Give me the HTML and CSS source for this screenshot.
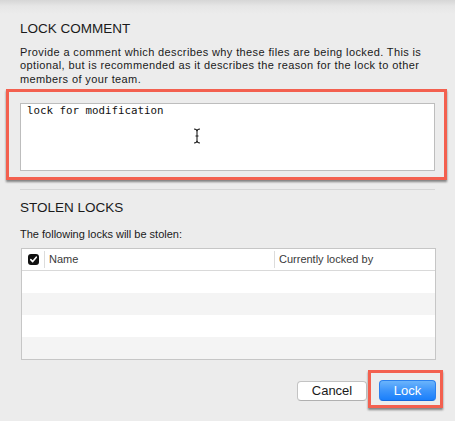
FILE: index.html
```html
<!DOCTYPE html>
<html>
<head>
<meta charset="utf-8">
<link rel="stylesheet" href="styles.css">
</head>
<body>
<div class="dialog">
  <h2 class="section-title">LOCK COMMENT</h2>
  <p class="desc wide">Provide a comment which describes why these files are being locked. This is optional, but is recommended as it describes the reason for the lock to other members of your team.</p>
  <div class="highlight comment-box">
    <div class="textarea">
      <span class="typed">lock for modification</span>
      <svg class="ibeam" width="8" height="16" viewBox="0 0 8 16">
        <path d="M1 1 Q4 1 4 3.5 Q4 1 7 1 M4 3.5 V12.5 M1 15 Q4 15 4 12.5 Q4 15 7 15 M2.5 8 H5.5" fill="none" stroke="#1e1e1e" stroke-width="1.1"/>
      </svg>
    </div>
  </div>
  <hr class="sep">
  <h2 class="section-title stolen">STOLEN LOCKS</h2>
  <p class="desc small">The following locks will be stolen:</p>
  <div class="table">
    <div class="thead">
      <div class="col-check"><span class="checkbox"><svg width="11" height="11" viewBox="0 0 11 11"><path d="M2.8 5.6 L4.7 7.6 L8.3 3.2" fill="none" stroke="#fff" stroke-width="1.6" stroke-linecap="round" stroke-linejoin="round"/></svg></span></div>
      <div class="col-name">Name</div>
      <div class="col-by">Currently locked by</div>
    </div>
    <div class="row"></div>
    <div class="row alt"></div>
    <div class="row"></div>
    <div class="row alt"></div>
  </div>
  <div class="actions">
    <button class="btn cancel">Cancel</button>
    <div class="highlight lock-box">
      <button class="btn primary">Lock</button>
    </div>
  </div>
</div>
</body>
</html>
```
FILE: styles.css
```css
html, body {
  margin: 0;
  padding: 0;
}
body {
  width: 455px;
  height: 421px;
  overflow: hidden;
  background: linear-gradient(to bottom, #d6d6d6 0px, #e6e6e6 6px, #ececec 14px, #ececec 100%);
  font-family: "Liberation Sans", Arial, sans-serif;
  color: #1f1f1f;
}
.dialog {
  padding: 21px 20px 0 20px;
}
.section-title {
  margin: 0;
  font-size: 13.5px;
  line-height: 16px;
  font-weight: normal;
  color: #1a1a1a;
}
.desc {
  margin: 9px 0 0 0;
  font-size: 11px;
  line-height: 13.3px;
  color: #1a1a1a;
}
.wide {
  letter-spacing: 0.38px;
}
.highlight {
  border: 3px solid #f3604f;
  box-shadow: 0 2px 2px rgba(0, 0, 0, 0.45);
}
.comment-box {
  margin: 3px -12px 0 -14px;
  padding: 11px 9px 6px 11px;
}
.textarea {
  position: relative;
  box-sizing: border-box;
  height: 68px;
  background: #fff;
  border: 1px solid #bdbdbd;
  padding: 0 6px;
  font-family: "DejaVu Sans Mono", "Liberation Mono", monospace;
  font-size: 10.8px;
  line-height: 13px;
  color: #111;
}
.ibeam {
  position: absolute;
  left: 172px;
  top: 24px;
}
.sep {
  margin: 9px 0 0 0;
  border: 0;
  border-top: 1px solid #d6d6d6;
  height: 0;
}
.stolen {
  margin-top: 10px;
}
.small {
  margin-top: 11px;
  line-height: 14px;
}
.table {
  margin: 7px -1px 0 1px;
  border: 1px solid #c6c6c6;
  background: #fff;
}
.thead {
  display: flex;
  height: 21px;
  border-bottom: 1px solid #d9d9d9;
  font-size: 11px;
  line-height: 21px;
  color: #3a3a3a;
}
.col-check {
  width: 23px;
  display: flex;
  align-items: center;
  padding-left: 6px;
  box-sizing: border-box;
  border-right: 1px solid #dcdcdc;
  margin: 2px 0;
}
.checkbox {
  width: 11px;
  height: 11px;
  border-radius: 3px;
  background: #111;
  display: block;
}
.checkbox svg {
  display: block;
}
.col-name {
  width: 230px;
  padding-left: 4px;
  box-sizing: border-box;
  border-right: 1px solid #dcdcdc;
  margin: 2px 0;
  line-height: 17px;
}
.col-by {
  flex: 1;
  padding-left: 4px;
  margin: 2px 0;
  line-height: 17px;
}
.row {
  height: 22px;
  background: #fff;
}
.row.alt {
  background: #f4f4f4;
}
.actions {
  display: flex;
  justify-content: flex-end;
  align-items: flex-start;
  gap: 1px;
  margin: 10px -8px 0 0;
}
.btn {
  font-family: "Liberation Sans", Arial, sans-serif;
  font-size: 13px;
  padding: 0;
  margin: 0;
  box-sizing: border-box;
  border-radius: 4px;
  cursor: default;
}
.cancel {
  margin-top: 11px;
  width: 70px;
  height: 20px;
  line-height: 18px;
  background: #fff;
  color: #1a1a1a;
  border: 1px solid #c3c3c3;
  border-bottom-color: #b0b0b0;
}
.lock-box {
  padding: 7px 4px 4px 8px;
}
.primary {
  display: block;
  width: 57px;
  height: 21px;
  line-height: 19px;
  color: #fff;
  background: linear-gradient(to bottom, #6bb4fb 0%, #3d95fb 50%, #1a7ffb 100%);
  border: 1px solid #2a80ee;
  border-bottom-color: #1468dc;
}
```
